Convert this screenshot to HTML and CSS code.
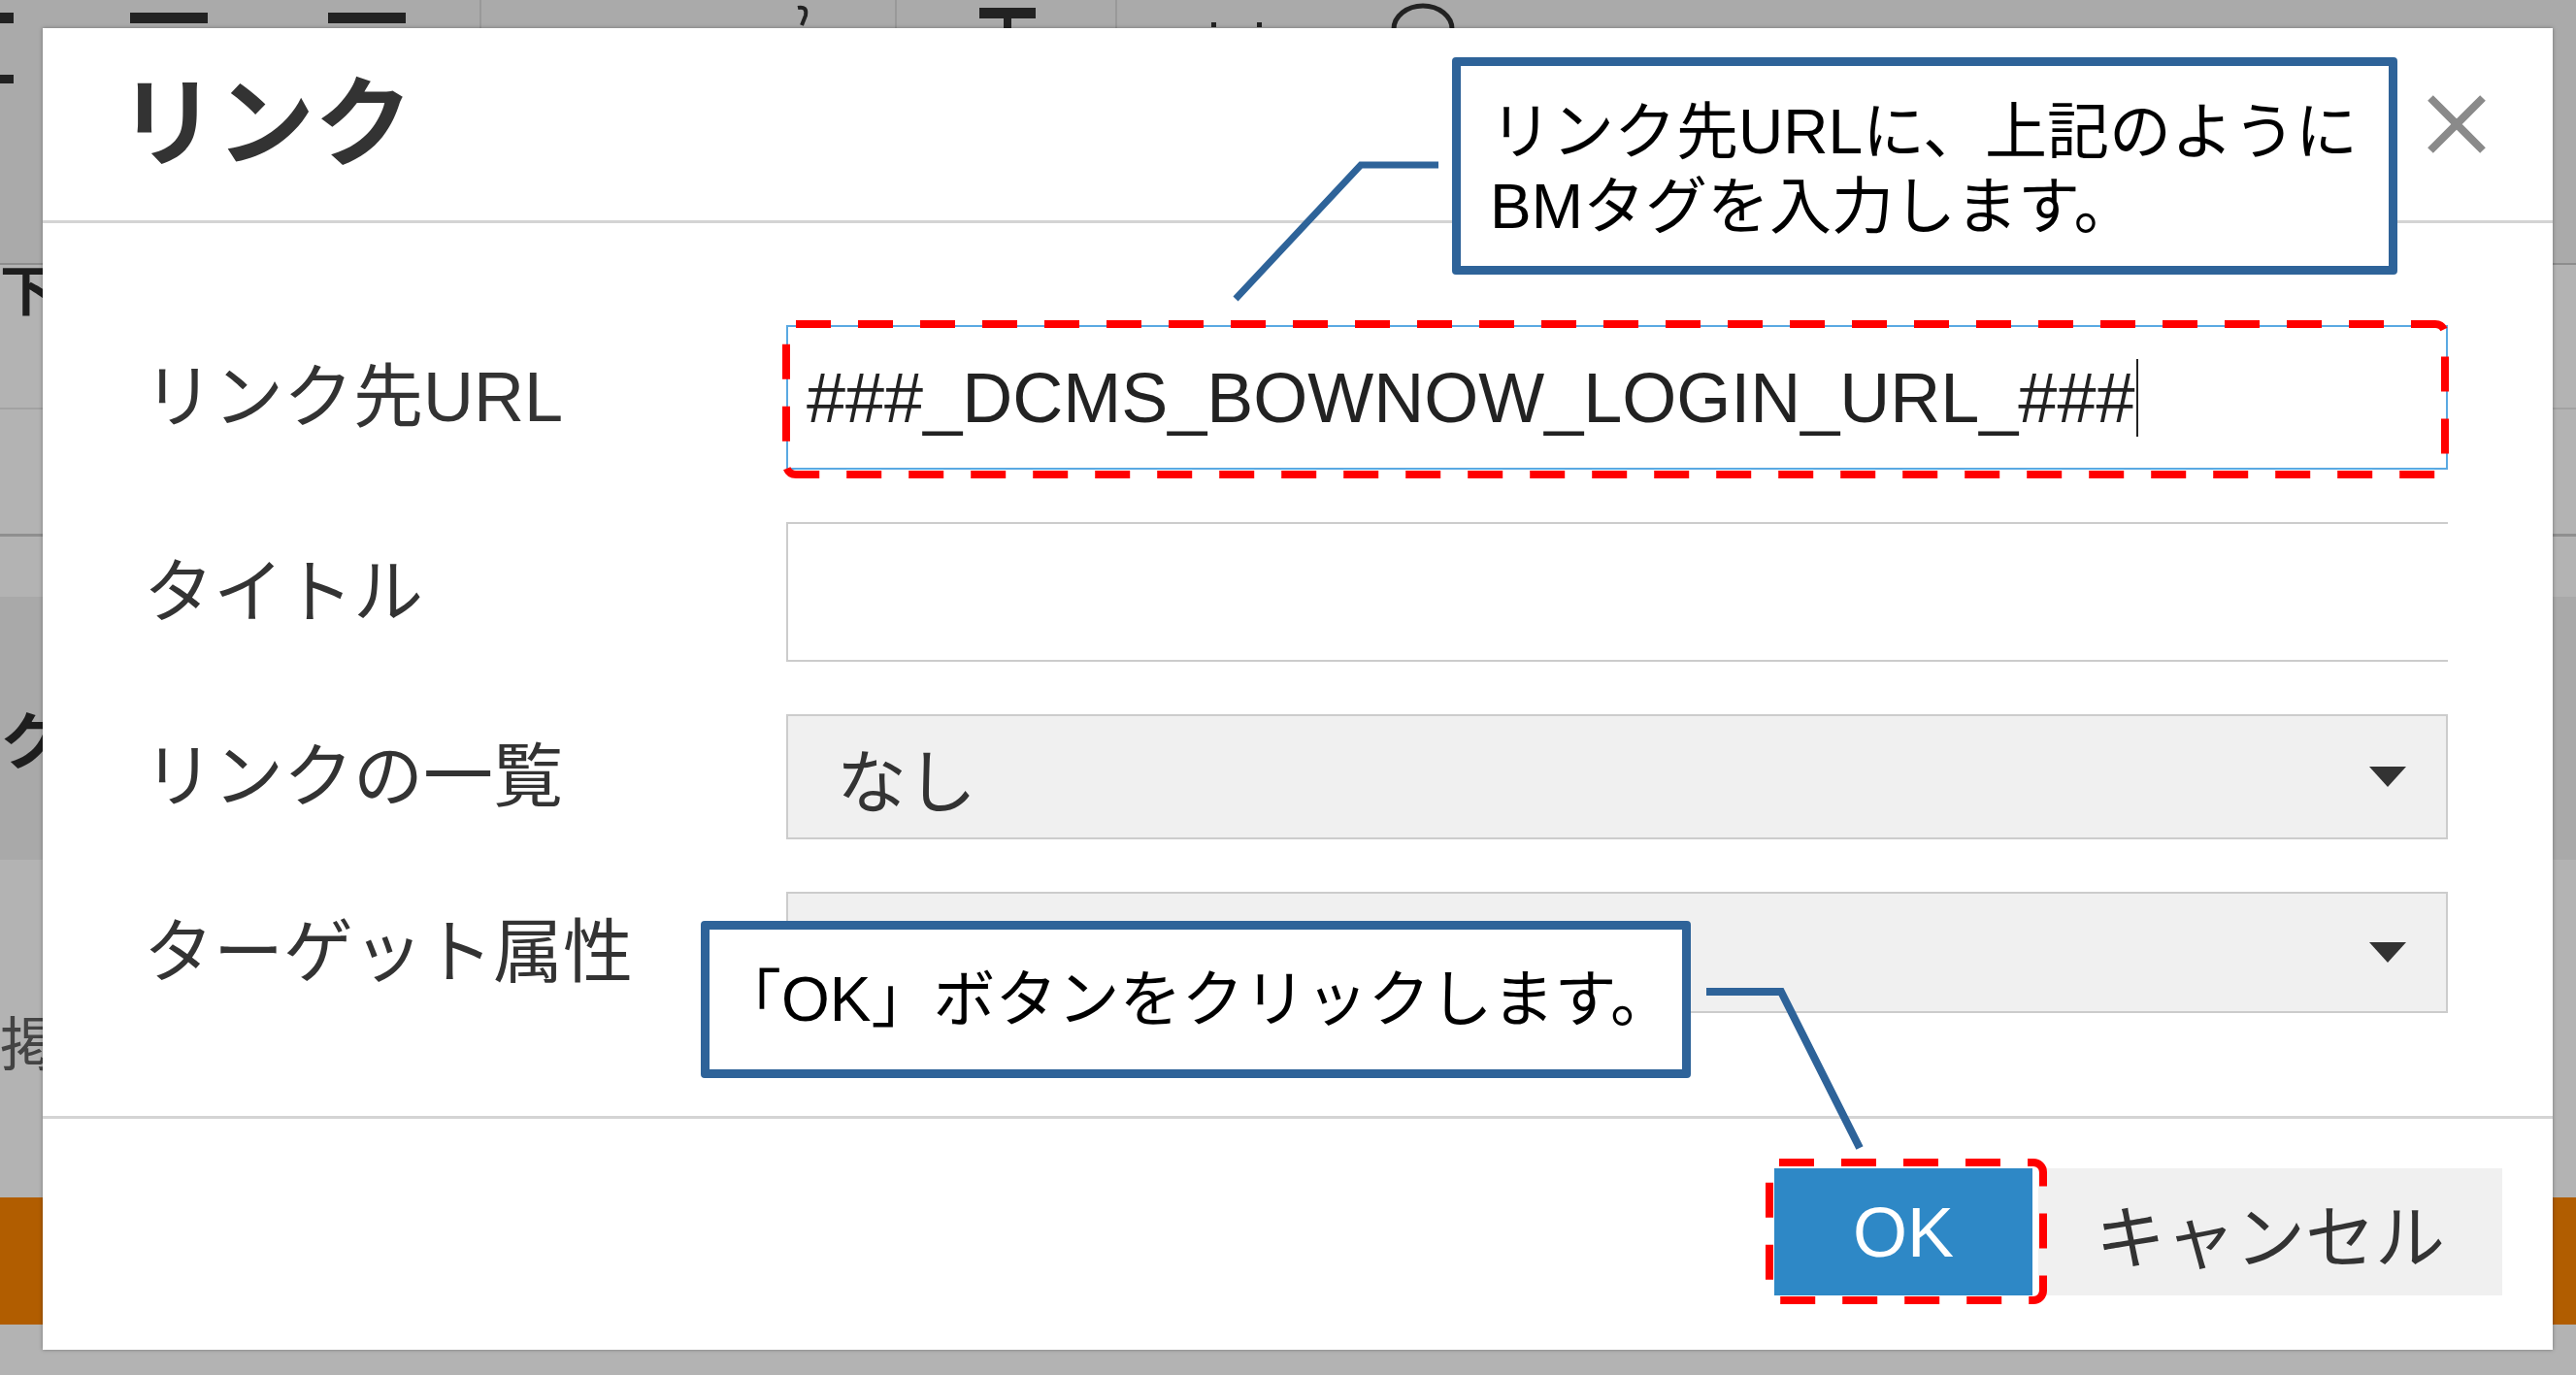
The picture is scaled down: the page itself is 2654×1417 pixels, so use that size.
FILE: index.html
```html
<!DOCTYPE html>
<html lang="ja">
<head>
  <meta charset="UTF-8" />
  <title>リンク</title>
  <link rel="stylesheet" href="styles.css">
</head>
<body>

  <div class="page">
    <div class="toolbar">
      <svg class="tb-icons" width="1520" height="90" viewBox="0 0 1520 90">
        <rect x="0" y="13" width="14" height="11" fill="#222"/>
        <rect x="0" y="77" width="14" height="9" fill="#222"/>
        <rect x="134" y="13" width="80" height="11" fill="#222"/>
        <rect x="338" y="13" width="80" height="11" fill="#222"/>
        <rect x="494" y="0" width="2" height="29" fill="#999"/>
        <path d="M822 8 q10 -2 8 8 l-4 10" stroke="#222" stroke-width="4" fill="none"/>
        <rect x="922" y="0" width="2" height="29" fill="#999"/>
        <rect x="1009" y="8" width="58" height="11" fill="#222"/>
        <rect x="1034" y="15" width="8" height="14" fill="#222"/>
        <rect x="1149" y="0" width="2" height="29" fill="#999"/>
        <rect x="1248" y="23" width="5" height="5" fill="#222"/>
        <rect x="1295" y="23" width="5" height="5" fill="#222"/>
        <path d="M1436 30 a30 24 0 0 1 60 0" stroke="#222" stroke-width="5" fill="none"/>
      </svg>
    </div>
    <div class="bg-row r1"><span class="frag f1">下</span></div>
    <div class="bg-row r2"></div>
    <div class="bg-row r3"></div>
    <div class="bg-row band"><span class="frag f2">ク</span></div>
    <div class="bg-row r5"><span class="frag f3">掲</span></div>
    <div class="bg-row orange"></div>
  </div>

  <div class="modal">
    <div class="modal-head">
      <h2>リンク</h2>
      <span class="close">
        <svg width="62" height="62" viewBox="0 0 62 62">
          <path d="M4 4 L58 58 M58 4 L4 58" stroke="#8a8a8a" stroke-width="8"/>
        </svg>
      </span>
    </div>

    <div class="modal-body">
      <div class="row">
        <label>リンク先URL</label>
        <div class="field url">###_DCMS_BOWNOW_LOGIN_URL_###<span class="caret"></span></div>
      </div>
      <div class="row">
        <label>タイトル</label>
        <div class="field title"></div>
      </div>
      <div class="row">
        <label>リンクの一覧</label>
        <div class="field select s1">なし<span class="arrow"></span></div>
      </div>
      <div class="row">
        <label>ターゲット属性</label>
        <div class="field select s2"><span></span><span class="arrow"></span></div>
      </div>
    </div>

    <div class="modal-foot">
      <button class="btn ok">OK</button>
      <button class="btn cancel">キャンセル</button>
    </div>
  </div>

  <svg class="marks" width="2654" height="1417" viewBox="0 0 2654 1417">
    <rect x="810" y="334" width="1709" height="155" rx="10" fill="none" stroke="#ff0000" stroke-width="8" stroke-dasharray="36 28"/>
    <rect x="1823" y="1198" width="282" height="142" rx="10" fill="none" stroke="#ff0000" stroke-width="8" stroke-dasharray="36 28"/>
    <polyline points="1273,308 1402,170 1482,170" fill="none" stroke="#2e6399" stroke-width="7"/>
    <polyline points="1758,1022 1835,1022 1916,1183" fill="none" stroke="#2e6399" stroke-width="8"/>
  </svg>

  <div class="note note-url">リンク先URLに、上記のように<br>BMタグを入力します。</div>
  <div class="note note-ok">「OK」ボタンをクリックします。</div>

</body>
</html>
```

FILE: styles.css
```css
* {
  box-sizing: border-box;
}

body {
  margin: 0;
  width: 2654px;
  height: 1417px;
  overflow: hidden;
  position: relative;
  background-color: #b3b3b3;
  font-family: "Liberation Sans", "Noto Sans CJK JP", sans-serif;
  color: #333;
}

/* page behind the dialog */
.toolbar {
  height: 273px;
  background-color: #aaaaaa;
  border-bottom: 2px solid #8d8d8d;
}

.tb-icons {
  display: block;
}

.bg-row {
  overflow: hidden;
}

.r1 {
  height: 147px;
}

.r2 {
  height: 130px;
  border-top: 2px solid #a2a2a2;
}

.r3 {
  height: 65px;
  border-top: 3px solid #8f8f8f;
}

.band {
  height: 271px;
  background-color: #a9a9a9;
  padding-top: 118px;
}

.r5 {
  height: 348px;
  padding-top: 162px;
}

.orange {
  height: 131px;
  background-color: #b15d00;
}

.frag {
  display: block;
  line-height: 1;
  color: #1e1e1e;
}

.f1 {
  font-size: 56px;
  font-weight: 700;
}

.f2 {
  font-size: 64px;
  font-weight: 700;
}

.f3 {
  font-size: 60px;
  color: #444;
}

/* dialog */
.modal {
  position: absolute;
  left: 44px;
  top: 29px;
  width: 2586px;
  height: 1362px;
  background-color: #fff;
  box-shadow: 0 0 4px rgba(0,0,0,0.35);
  display: flex;
  flex-direction: column;
}

.modal-head {
  height: 201px;
  border-bottom: 3px solid #d4d4d4;
  display: flex;
  justify-content: space-between;
  align-items: center;
  padding: 0 68px 0 78px;
}

.modal-head h2 {
  margin: 0;
  font-size: 101px;
  font-weight: 700;
  line-height: 1;
  color: #333;
}

.close {
  display: block;
  width: 62px;
  height: 62px;
}

.close svg {
  display: block;
}

.modal-body {
  height: 920px;
  padding: 105px 108px 0 104px;
  display: flex;
  flex-direction: column;
  gap: 54px;
}

.row {
  display: flex;
  align-items: center;
}

.row label {
  flex: none;
  width: 662px;
  font-size: 72px;
  line-height: 1.2;
  color: #333;
}

.field {
  flex: 1;
  border: 2px solid #cccccc;
  display: flex;
  align-items: center;
}

.url {
  height: 149px;
  border-color: #5aa9e2;
  padding-left: 19px;
  font-size: 72px;
  color: #222;
  white-space: nowrap;
}

.caret {
  display: inline-block;
  width: 2px;
  height: 80px;
  margin-left: 1px;
  background-color: #222;
}

.title {
  height: 144px;
  border-right: none;
}

.select {
  background-color: #f0f0f0;
  justify-content: space-between;
  padding: 0 41px 0 50px;
  font-size: 72px;
  color: #333;
}

.s1 {
  height: 129px;
}

.s2 {
  height: 125px;
}

.arrow {
  width: 0;
  height: 0;
  border-left: 19px solid transparent;
  border-right: 19px solid transparent;
  border-top: 21px solid #333;
}

.modal-foot {
  flex: 1;
  border-top: 3px solid #d4d4d4;
  display: flex;
  justify-content: flex-end;
  align-items: flex-start;
  gap: 6px;
  padding: 51px 52px 0 0;
}

.btn {
  height: 131px;
  border: none;
  margin: 0;
  padding: 0;
  font-family: "Liberation Sans", "Noto Sans CJK JP", sans-serif;
}

.ok {
  width: 266px;
  background-color: #2e88c6;
  color: #fff;
  font-size: 72px;
}

.cancel {
  width: 478px;
  background-color: #f0f0f0;
  color: #333;
  font-size: 72px;
}

/* annotations */
.marks {
  position: absolute;
  left: 0;
  top: 0;
}

.note {
  position: absolute;
  background-color: #fff;
  border: 9px solid #2e6399;
  border-radius: 4px;
  font-size: 64px;
  color: #000;
}

.note-url {
  left: 1496px;
  top: 59px;
  width: 974px;
  height: 224px;
  padding: 30px 0 0 30px;
  line-height: 77px;
}

.note-ok {
  left: 722px;
  top: 949px;
  width: 1020px;
  height: 162px;
  display: flex;
  align-items: center;
  justify-content: center;
  line-height: 1.2;
}
```
